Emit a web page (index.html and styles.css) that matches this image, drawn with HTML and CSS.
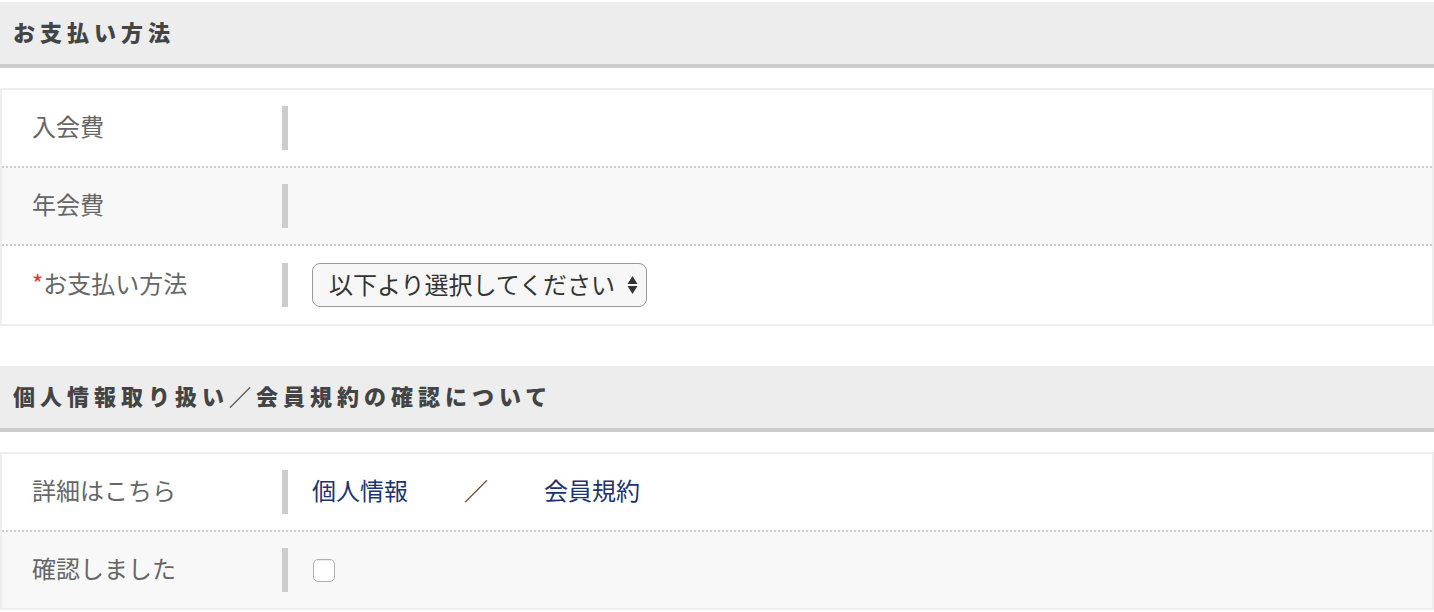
FILE: index.html
```html
<!DOCTYPE html>
<html lang="ja">
<head>
  <meta charset="UTF-8">
  <title>お支払い方法</title>
  <link rel="stylesheet" href="styles.css">
</head>
<body>
<div class="form-section first">
  <h2 class="section-title">お支払い方法</h2>
  <div class="form-box">
    <div class="form-row">
      <div class="row-label">入会費</div>
      <div class="row-value"></div>
    </div>
    <div class="form-row alt">
      <div class="row-label">年会費</div>
      <div class="row-value"></div>
    </div>
    <div class="form-row row-select">
      <div class="row-label"><span class="req">*</span>お支払い方法</div>
      <div class="row-value">
        <span class="select-wrap">
          <select class="pay-select">
            <option>以下より選択してください</option>
          </select>
          <svg class="select-arrow" width="11" height="20" viewBox="0 0 11 20"><path d="M5.5 1 L10.5 9 H0.5 Z M5.5 19 L10.5 11 H0.5 Z" fill="#333"/></svg>
        </span>
      </div>
    </div>
  </div>
</div>

<div class="form-section">
  <h2 class="section-title">個人情報取り扱い／会員規約の確認について</h2>
  <div class="form-box">
    <div class="form-row">
      <div class="row-label">詳細はこちら</div>
      <div class="row-value links">
        <a href="#">個人情報</a>
        <span class="slash">／</span>
        <a href="#">会員規約</a>
      </div>
    </div>
    <div class="form-row alt">
      <div class="row-label">確認しました</div>
      <div class="row-value"><input type="checkbox" class="check"></div>
    </div>
  </div>
</div>
</body>
</html>
```

FILE: styles.css
```css
body {
  margin: 0;
  padding-top: 2px;
  background: #fff;
  font-family: "Noto Sans CJK JP", "Noto Sans", sans-serif;
  color: #666;
}
.form-section {
  margin-top: 40px;
}
.form-section.first {
  margin-top: 0;
}
.section-title {
  margin: 0 0 20px;
  height: 62px;
  line-height: 58px;
  padding-left: 13px;
  background: #ededed;
  border-bottom: 4px solid #ccc;
  font-size: 22px;
  font-weight: 900;
  letter-spacing: 5px;
  color: #444;
}
.form-box {
  border: 2px solid #eee;
}
.form-row {
  display: grid;
  grid-template-columns: 280px 1fr;
  align-items: center;
  height: 76px;
}
.form-row.row-select {
  height: 78px;
}
.form-row + .form-row {
  border-top: 2px dotted #ccc;
}
.form-row.alt {
  background: #f8f8f8;
}
.row-label {
  padding-left: 30px;
  padding-bottom: 4px;
  font-size: 24px;
  line-height: 1;
  color: #666;
}
.req {
  color: #e8322b;
}
.row-value {
  display: flex;
  align-items: center;
  height: 44px;
  border-left: 6px solid #ccc;
  padding-left: 24px;
}
.select-wrap {
  position: relative;
  display: inline-block;
}
.pay-select {
  appearance: none;
  -webkit-appearance: none;
  height: 44px;
  width: 335px;
  padding: 0 30px 3px 16px;
  border: 1px solid #999;
  border-radius: 8px;
  background: #f7f7f7;
  font-family: inherit;
  font-size: 24px;
  color: #333;
}
.select-arrow {
  position: absolute;
  right: 9px;
  top: 12px;
}
.links {
  gap: 56px;
  font-size: 24px;
  line-height: 1;
  padding-bottom: 4px;
  box-sizing: border-box;
  height: 44px;
}
.links a {
  color: #1d3270;
  text-decoration: none;
}
.slash {
  color: #333;
}
.check {
  appearance: none;
  -webkit-appearance: none;
  margin: 0 0 0 1px;
  width: 22px;
  height: 23px;
  border: 1px solid #b0b0b0;
  border-radius: 5px;
  background: #fff;
  box-shadow: inset 0 1px 1px rgba(0,0,0,0.08);
}
```
